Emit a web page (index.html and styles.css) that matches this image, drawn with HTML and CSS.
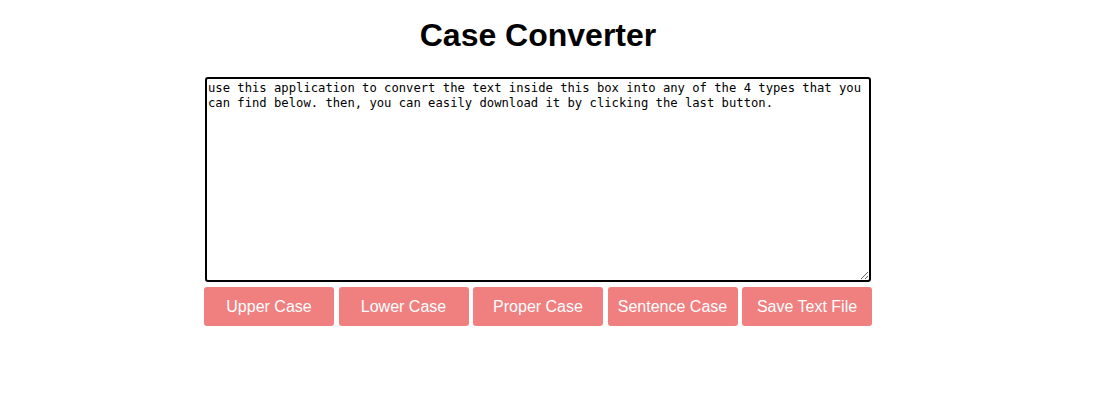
FILE: index.html
```html
<!DOCTYPE html>
<html lang="en">
<head>
<meta charset="utf-8">
<title>Case Converter</title>
<link rel="stylesheet" href="styles.css">
</head>
<body>
<main class="app">
  <h1 class="title">Case Converter</h1>
  <div class="panel">
    <textarea class="editor" spellcheck="false">use this application to convert the text inside this box into any of the 4 types that you can find below. then, you can easily download it by clicking the last button.</textarea>
    <div class="actions">
      <button class="btn" type="button">Upper Case</button>
      <button class="btn" type="button">Lower Case</button>
      <button class="btn" type="button">Proper Case</button>
      <button class="btn" type="button">Sentence Case</button>
      <button class="btn" type="button">Save Text File</button>
    </div>
  </div>
</main>
</body>
</html>
```
FILE: styles.css
```css
html, body {
  margin: 0;
  padding: 0;
  background: #fff;
}

.app {
  width: 1076px;
  display: flex;
  flex-direction: column;
  align-items: center;
  font-family: "Liberation Sans", Arial, sans-serif;
}

.title {
  margin: 17px 0 23px;
  font-size: 32px;
  font-weight: bold;
  line-height: normal;
  color: #000;
}

.panel {
  width: 668px;
  display: flex;
  flex-direction: column;
  align-items: center;
  gap: 5px;
}

.editor {
  box-sizing: border-box;
  width: 666px;
  height: 205px;
  margin: 0;
  padding: 2px 1px 1px;
  border: 2px solid #000;
  border-radius: 3px;
  outline: none;
  font-family: "DejaVu Sans Mono", "Liberation Mono", monospace;
  font-size: 12.2px;
  line-height: 15px;
  color: #000;
  background: #fff;
  resize: both;
}

.actions {
  display: flex;
  gap: 4.5px;
  width: 668px;
}

.btn {
  box-sizing: border-box;
  width: 130px;
  height: 39px;
  margin: 0;
  padding: 0;
  border: none;
  border-radius: 3px;
  background: #f08080;
  color: #fff;
  font-family: "Liberation Sans", Arial, sans-serif;
  font-size: 16px;
  cursor: pointer;
}
```
